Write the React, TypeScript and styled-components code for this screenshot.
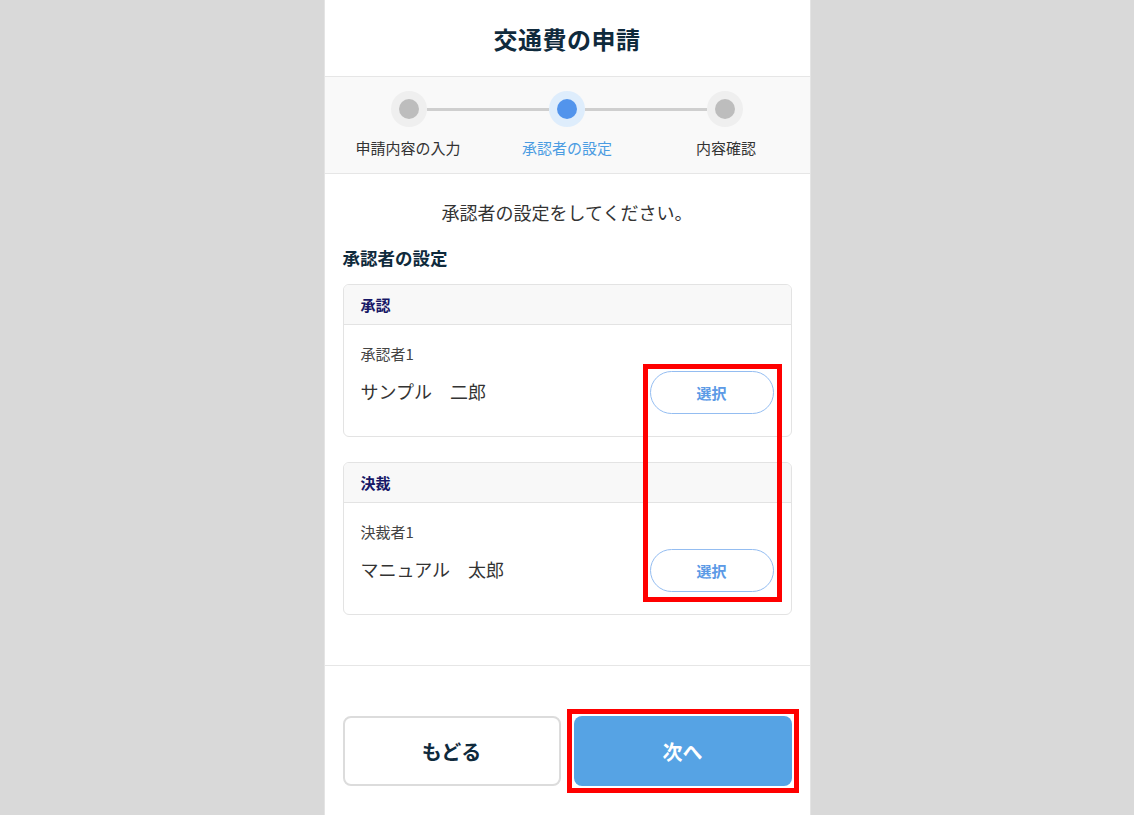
import styled, { createGlobalStyle } from "styled-components";

const GlobalStyle = createGlobalStyle`
  html, body {
    margin: 0;
    padding: 0;
    background: #d9d9d9;
  }
  body {
    font-family: "Noto Sans CJK JP", "Noto Sans", "Liberation Sans", sans-serif;
    color: #333;
  }
  * {
    box-sizing: border-box;
  }
`;

interface Step {
  label: string;
  active?: boolean;
}

const steps: Step[] = [
  { label: "申請内容の入力" },
  { label: "承認者の設定", active: true },
  { label: "内容確認" },
];

interface Approver {
  title: string;
  role: string;
  name: string;
}

const approvers: Approver[] = [
  { title: "承認", role: "承認者1", name: "サンプル　二郎" },
  { title: "決裁", role: "決裁者1", name: "マニュアル　太郎" },
];

export default function App() {
  return (
    <>
      <GlobalStyle />
      <Panel>
        <Header>
          <Title>交通費の申請</Title>
        </Header>

        <Stepper>
          <Track>
            {steps.map((s, i) => (
              <TrackItem key={s.label} $first={i === 0}>
                <Dot $active={s.active} />
              </TrackItem>
            ))}
          </Track>
          <Labels>
            {steps.map((s) => (
              <StepLabel key={s.label} $active={s.active}>
                {s.label}
              </StepLabel>
            ))}
          </Labels>
        </Stepper>

        <Content>
          <Lead>承認者の設定をしてください。</Lead>
          <SectionTitle>承認者の設定</SectionTitle>
          <CardList>
            {approvers.map((a) => (
              <Card key={a.title}>
                <CardHeader>{a.title}</CardHeader>
                <CardBody>
                  <Role>{a.role}</Role>
                  <NameRow>
                    <Name>{a.name}</Name>
                    <SelectButton>選択</SelectButton>
                  </NameRow>
                </CardBody>
              </Card>
            ))}
            <Highlight />
          </CardList>
        </Content>

        <Footer>
          <BackButton>もどる</BackButton>
          <NextFrame>
            <NextButton>次へ</NextButton>
          </NextFrame>
        </Footer>
      </Panel>
    </>
  );
}

const Panel = styled.div`
  width: 487px;
  margin: 0 auto;
  background: #fff;
  border-left: 1px solid #e4e4e4;
  border-right: 1px solid #e4e4e4;
  min-height: 900px;
`;

const Header = styled.header`
  height: 77px;
  display: flex;
  align-items: center;
  justify-content: center;
  border-bottom: 1px solid #e6e6e6;
`;

const Title = styled.h1`
  margin: 0;
  font-size: 24px;
  font-weight: 700;
  color: #0f2a3c;
  letter-spacing: 0.5px;
`;

const Stepper = styled.div`
  background: #f9f9f9;
  border-bottom: 1px solid #e6e6e6;
  padding: 14px 0 15px;
`;

const Track = styled.div`
  display: flex;
  align-items: center;
  padding: 0 67px 0 66px;
`;

const TrackItem = styled.div<{ $first?: boolean }>`
  display: flex;
  align-items: center;
  flex: ${(p) => (p.$first ? "0 0 auto" : "1 1 0")};

  &::before {
    content: "";
    display: ${(p) => (p.$first ? "none" : "block")};
    flex: 1;
    height: 3px;
    background: #cfcfcf;
  }
`;

const Dot = styled.span<{ $active?: boolean }>`
  width: 36px;
  height: 36px;
  border-radius: 50%;
  background: ${(p) => (p.$active ? "#deedfc" : "#efefef")};
  display: flex;
  align-items: center;
  justify-content: center;

  &::after {
    content: "";
    width: 20px;
    height: 20px;
    border-radius: 50%;
    background: ${(p) => (p.$active ? "#5294ec" : "#bdbdbd")};
  }
`;

const Labels = styled.div`
  display: grid;
  grid-template-columns: repeat(3, 1fr);
  padding: 0 4px;
  margin-top: 11px;
`;

const StepLabel = styled.div<{ $active?: boolean }>`
  text-align: center;
  font-size: 15px;
  line-height: 20px;
  color: ${(p) => (p.$active ? "#4b9ce2" : "#333")};
`;

const Content = styled.main`
  padding: 26px 18px 50px;
  border-bottom: 1px solid #e6e6e6;
`;

const Lead = styled.p`
  margin: 0;
  text-align: center;
  font-size: 18px;
  line-height: 24px;
  color: #333;
`;

const SectionTitle = styled.h2`
  margin: 22px 0 14px;
  font-size: 17.5px;
  line-height: 24px;
  font-weight: 700;
  color: #0f2a3c;
`;

const CardList = styled.div`
  position: relative;
  display: flex;
  flex-direction: column;
  gap: 25px;
`;

const Card = styled.section`
  border: 1px solid #e3e3e3;
  border-radius: 6px;
  overflow: hidden;
`;

const CardHeader = styled.div`
  height: 40px;
  display: flex;
  align-items: center;
  padding: 0 17px;
  background: #f8f8f8;
  border-bottom: 1px solid #e3e3e3;
  font-size: 15px;
  font-weight: 700;
  color: #171766;
`;

const CardBody = styled.div`
  padding: 19px 17px 22px;
`;

const Role = styled.div`
  font-size: 15px;
  line-height: 20px;
  color: #444;
`;

const NameRow = styled.div`
  margin-top: 7px;
  display: flex;
  align-items: center;
  justify-content: space-between;
`;

const Name = styled.div`
  font-size: 18px;
  color: #333;
  margin-top: -4px;
`;

const SelectButton = styled.button`
  width: 124px;
  height: 43px;
  border-radius: 22px;
  border: 1.5px solid #94bdf1;
  background: #fff;
  color: #5c9ae6;
  font-family: inherit;
  font-size: 15px;
  font-weight: 700;
  cursor: pointer;
`;

const Highlight = styled.div`
  position: absolute;
  left: 300px;
  top: 80px;
  width: 139px;
  height: 238px;
  border: 5px solid #ff0000;
  pointer-events: none;
`;

const Footer = styled.footer`
  display: grid;
  grid-template-columns: 1fr 1fr;
  gap: 13px;
  padding: 50px 18px 40px;
`;

const BaseButton = styled.button`
  width: 100%;
  height: 70px;
  border-radius: 8px;
  font-family: inherit;
  font-size: 20px;
  font-weight: 700;
  cursor: pointer;
`;

const BackButton = styled(BaseButton)`
  background: #fff;
  border: 2px solid #dcdcdc;
  color: #0f2a3c;
`;

const NextFrame = styled.div`
  margin: -7px;
  padding: 2px;
  border: 5px solid #ff0000;
`;

const NextButton = styled(BaseButton)`
  display: block;
  background: #56a3e4;
  border: none;
  color: #fff;
`;
